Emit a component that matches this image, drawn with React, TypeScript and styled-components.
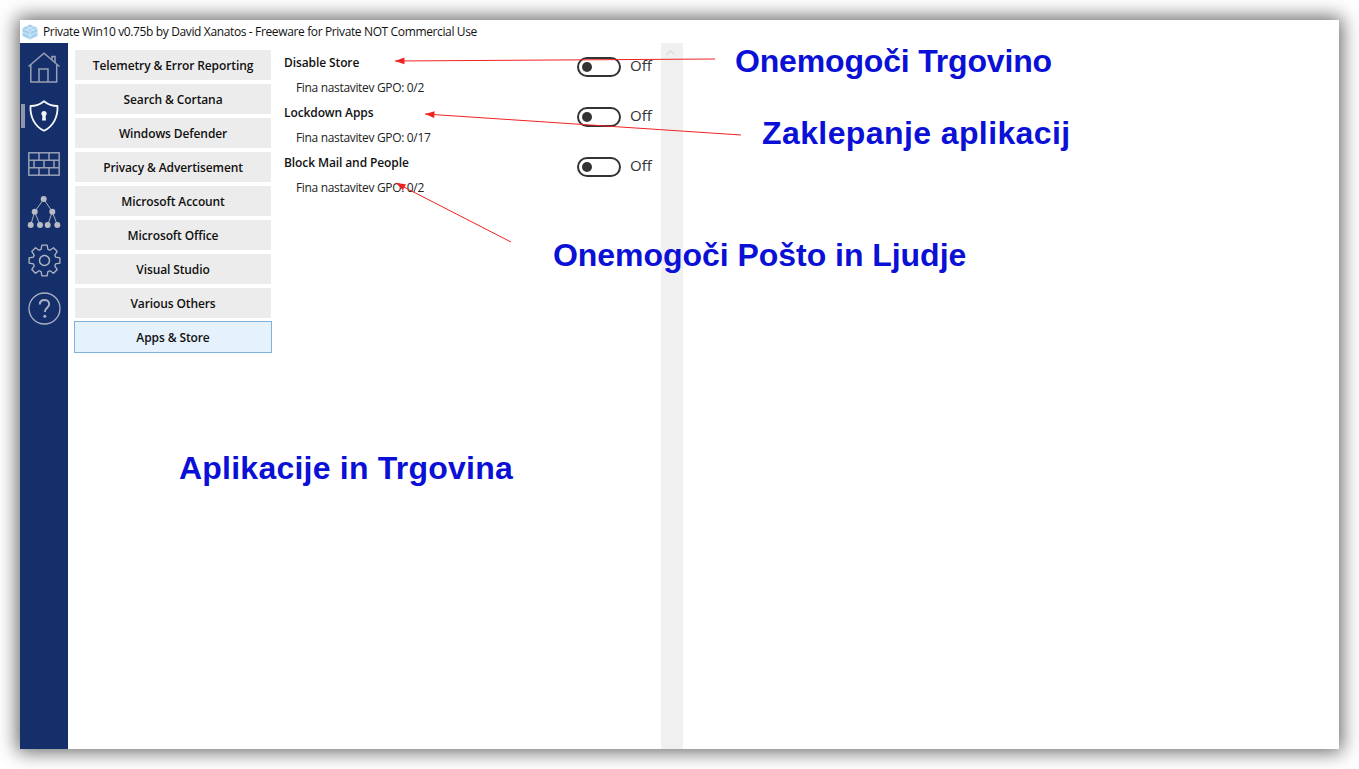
import React from "react";
import styled, { createGlobalStyle } from "styled-components";

const Global = createGlobalStyle`
  html, body { margin: 0; padding: 0; background: #fff; overflow: hidden; }
  body { font-family: "Open Sans", "Noto Sans", sans-serif; color: #1a1a1a; }
`;

const Stage = styled.div`
  position: relative;
  width: 1359px;
  height: 769px;
  padding: 20px;
  box-sizing: border-box;
`;

const Window = styled.div`
  width: 1319px;
  height: 729px;
  background: #fff;
  display: flex;
  flex-direction: column;
  box-shadow: 0 0 18px 3px rgba(0, 0, 0, 0.6);
`;

const TitleBar = styled.div`
  height: 23px;
  display: flex;
  align-items: center;
  gap: 5px;
  padding-left: 2px;
  font-size: 12px;
  letter-spacing: -0.365px;
  color: #111;
  white-space: nowrap;
`;

const Body = styled.div`
  flex: 1;
  display: flex;
  min-height: 0;
`;

const Rail = styled.nav`
  width: 48px;
  background: #152f6b;
  padding-top: 1px;
  display: flex;
  flex-direction: column;
`;

const RailItem = styled.div<{ $active?: boolean; $color: string }>`
  position: relative;
  height: 48px;
  display: flex;
  align-items: center;
  justify-content: center;
  color: ${(p) => p.$color};
  &::before {
    content: "";
    display: ${(p) => (p.$active ? "block" : "none")};
    position: absolute;
    left: 1px;
    top: 12px;
    width: 4px;
    height: 24px;
    background: #8e97ab;
  }
`;

const Menu = styled.div`
  width: 204px;
  box-sizing: border-box;
  padding: 7px 1px 0 7px;
  display: flex;
  flex-direction: column;
  gap: 4px;
`;

const MenuButton = styled.div<{ $active?: boolean }>`
  box-sizing: border-box;
  display: flex;
  align-items: center;
  justify-content: center;
  margin: ${(p) => (p.$active ? "-1px -1px 0" : "0")};
  height: ${(p) => (p.$active ? "32px" : "30px")};
  background: ${(p) => (p.$active ? "#e5f1fb" : "#ececec")};
  border: ${(p) => (p.$active ? "1px solid #7fb1da" : "0")};
  font-size: 12px;
  font-weight: 600;
  letter-spacing: -0.11px;
  color: #111;
`;

const Content = styled.div`
  width: 389px;
  padding: 0 0 0 12px;
  box-sizing: border-box;
`;

const Rows = styled.div`
  padding-top: 7px;
`;

const Row = styled.div`
  height: 50px;
  display: grid;
  grid-template-columns: 293px auto;
  grid-template-rows: 25px 25px;
  align-items: center;
`;

const RowTitle = styled.div`
  font-size: 12px;
  font-weight: 600;
  letter-spacing: -0.1px;
  color: #111;
  grid-column: 1;
  grid-row: 1;
`;

const RowSub = styled.div`
  font-size: 12px;
  letter-spacing: -0.33px;
  color: #222;
  padding-left: 12px;
  grid-column: 1;
  grid-row: 2;
`;

const ToggleWrap = styled.div`
  grid-column: 2;
  grid-row: 1 / 3;
  align-self: start;
  margin-top: 7px;
  display: flex;
  align-items: center;
  gap: 9px;
`;

const Toggle = styled.div`
  width: 44px;
  height: 20px;
  box-sizing: border-box;
  border: 2px solid #333;
  border-radius: 10px;
  display: flex;
  align-items: center;
  padding-left: 3px;
  &::before {
    content: "";
    width: 10px;
    height: 10px;
    border-radius: 50%;
    background: #333;
  }
`;

const ToggleLabel = styled.span`
  font-size: 15px;
  line-height: 20px;
  margin-top: -4px;
  color: #333;
`;

const ScrollTrack = styled.div`
  width: 22px;
  background: #f0f0f0;
  display: flex;
  justify-content: center;
  align-items: flex-start;
  padding: 7px 4px 0 0;
  box-sizing: border-box;
`;

const Note = styled.div<{ $x: number; $y: number; $spacing: number }>`
  position: absolute;
  left: ${(p) => p.$x}px;
  top: ${(p) => p.$y}px;
  font-family: "Liberation Sans", Arial, sans-serif;
  font-weight: 700;
  font-size: 32px;
  line-height: 37px;
  letter-spacing: ${(p) => p.$spacing}px;
  color: #0a10d6;
  white-space: nowrap;
`;

const ArrowLayer = styled.svg`
  position: absolute;
  left: 0;
  top: 0;
  pointer-events: none;
`;

const Home = () => (
  <svg width="34" height="32" viewBox="0 0 34 32" fill="none" stroke="currentColor" strokeWidth="1.5">
    <path d="M1.5 14.5 L17 1.2 L32.5 14.5" />
    <path d="M25 7.8 V4.5 H28 V10.4" />
    <path d="M3.8 12.5 V30 H29.7 V12.5" />
    <path d="M12 30 V17 H21 V30" />
  </svg>
);

const Shield = () => (
  <svg width="30" height="32" viewBox="0 0 30 32" fill="none">
    <path d="M15 1.2 C19 4.5 24 6 28.5 6 C29 16 25 26 15 30.8 C5 26 1 16 1.5 6 C6 6 11 4.5 15 1.2 Z" stroke="currentColor" strokeWidth="1.8" strokeLinejoin="round" />
    <circle cx="15" cy="13.5" r="2.6" fill="currentColor" />
    <path d="M13.6 14 H16.4 L17 20.5 H13 Z" fill="currentColor" />
  </svg>
);

const Wall = () => (
  <svg width="32" height="24" viewBox="0 0 32 24" fill="none" stroke="currentColor" strokeWidth="1.5">
    <rect x="0.8" y="0.8" width="30.4" height="22.4" />
    <path d="M0.8 8.2 H31.2 M0.8 15.8 H31.2" />
    <path d="M11 0.8 V8.2 M21 0.8 V8.2 M6 8.2 V15.8 M16 8.2 V15.8 M26 8.2 V15.8 M11 15.8 V23.2 M21 15.8 V23.2" />
  </svg>
);

const Tree = () => (
  <svg width="34" height="34" viewBox="0 0 34 34" fill="none" stroke="currentColor" strokeWidth="0.9">
    <path d="M16.7 4 L7.7 16.8 M16.7 4 L25.3 16.8 M7.7 16.8 L3.7 30 M7.7 16.8 L13 30 M25.3 16.8 L20.7 30 M25.3 16.8 L30.3 30" />
    <g fill="currentColor" stroke="none">
      <circle cx="16.7" cy="4" r="3" />
      <circle cx="7.7" cy="16.8" r="3" />
      <circle cx="25.3" cy="16.8" r="3" />
      <circle cx="3.7" cy="30" r="3" />
      <circle cx="13" cy="30" r="3" />
      <circle cx="20.7" cy="30" r="3" />
      <circle cx="30.3" cy="30" r="3" />
    </g>
  </svg>
);

function gearPath() {
  const c = 16.5;
  const pts: string[] = [];
  const teeth = 8;
  const pt = (r: number, a: number) => `${(c + r * Math.cos(a)).toFixed(2)} ${(c + r * Math.sin(a)).toFixed(2)}`;
  for (let i = 0; i < teeth; i++) {
    const a = (i * 2 * Math.PI) / teeth - Math.PI / 2;
    pts.push(pt(11.6, a - 0.3), pt(15.6, a - 0.17), pt(15.6, a + 0.17), pt(11.6, a + 0.3));
  }
  return `M${pts.join(" L")} Z`;
}

const Gear = () => (
  <svg width="33" height="33" viewBox="0 0 33 33" fill="none" stroke="currentColor" strokeWidth="1.3" strokeLinejoin="round">
    <path d={gearPath()} />
    <circle cx="16.5" cy="16.5" r="5" strokeWidth="1.5" />
  </svg>
);

const Help = () => (
  <svg width="33" height="33" viewBox="0 0 33 33" fill="none" stroke="currentColor">
    <circle cx="16.5" cy="16.5" r="15.5" strokeWidth="1.3" />
    <path d="M11.8 12.5 C11.8 9.5 14 8 16.5 8 C19 8 21.2 9.6 21.2 12.2 C21.2 15.6 16.8 15.8 16.8 20" strokeWidth="2" />
    <circle cx="16.8" cy="24.3" r="1.5" fill="currentColor" stroke="none" />
  </svg>
);

const AppIcon = () => (
  <svg width="16" height="16" viewBox="0 0 16 16">
    <path d="M8 0.5 L15.5 4 V12 L8 15.5 L0.5 12 V4 Z" fill="#a3d0ec" />
    <path d="M0.5 4 L8 7.5 L15.5 4 M8 7.5 V15.5 M0.5 8 L8 11.5 L15.5 8 M4 2.4 L11.5 6 M12 2.4 L4.5 6" fill="none" stroke="#dff0fa" strokeWidth="0.8" />
  </svg>
);

const Chevron = () => (
  <svg width="9" height="5" viewBox="0 0 9 5" fill="none" stroke="#d6d6d6" strokeWidth="1.2">
    <path d="M0.5 4.5 L4.5 0.8 L8.5 4.5" />
  </svg>
);

const menu = [
  "Telemetry & Error Reporting",
  "Search & Cortana",
  "Windows Defender",
  "Privacy & Advertisement",
  "Microsoft Account",
  "Microsoft Office",
  "Visual Studio",
  "Various Others",
  "Apps & Store",
];

const rows = [
  { title: "Disable Store", sub: "Fina nastavitev GPO: 0/2" },
  { title: "Lockdown Apps", sub: "Fina nastavitev GPO: 0/17" },
  { title: "Block Mail and People", sub: "Fina nastavitev GPO: 0/2" },
];

const arrows = [
  { x1: 715, y1: 59, x2: 395, y2: 61 },
  { x1: 741, y1: 135, x2: 425, y2: 114 },
  { x1: 511, y1: 242, x2: 396, y2: 183 },
];

function head(a: { x1: number; y1: number; x2: number; y2: number }) {
  const t = Math.atan2(a.y1 - a.y2, a.x1 - a.x2);
  const l = 10;
  const w = 0.34;
  const p = (d: number) => `${a.x2 + l * Math.cos(t + d)},${a.y2 + l * Math.sin(t + d)}`;
  return `${a.x2},${a.y2} ${p(w)} ${p(-w)}`;
}

export default function App() {
  return (
    <Stage>
      <Global />
      <Window>
        <TitleBar>
          <AppIcon />
          <span>Private Win10 v0.75b by David Xanatos - Freeware for Private NOT Commercial Use</span>
        </TitleBar>
        <Body>
          <Rail>
            <RailItem $color="#98a0b4"><Home /></RailItem>
            <RailItem $active $color="#f4f5f8"><Shield /></RailItem>
            <RailItem $color="#98a0b4"><Wall /></RailItem>
            <RailItem $color="#b9bcc6"><Tree /></RailItem>
            <RailItem $color="#b0b5c3"><Gear /></RailItem>
            <RailItem $color="#aab0c0"><Help /></RailItem>
          </Rail>
          <Menu>
            {menu.map((m) => (
              <MenuButton key={m} $active={m === "Apps & Store"}>{m}</MenuButton>
            ))}
          </Menu>
          <Content>
            <Rows>
              {rows.map((r) => (
                <Row key={r.title}>
                  <RowTitle>{r.title}</RowTitle>
                  <RowSub>{r.sub}</RowSub>
                  <ToggleWrap>
                    <Toggle />
                    <ToggleLabel>Off</ToggleLabel>
                  </ToggleWrap>
                </Row>
              ))}
            </Rows>
          </Content>
          <ScrollTrack><Chevron /></ScrollTrack>
        </Body>
      </Window>
      <ArrowLayer width="1359" height="769" viewBox="0 0 1359 769">
        {arrows.map((a) => (
          <g key={a.x1}>
            <line x1={a.x1} y1={a.y1} x2={a.x2} y2={a.y2} stroke="#f02222" strokeWidth="1" />
            <polygon points={head(a)} fill="#f02222" />
          </g>
        ))}
      </ArrowLayer>
      <Note $x={735} $y={43} $spacing={-0.17}>Onemogoči Trgovino</Note>
      <Note $x={762} $y={115} $spacing={0.4}>Zaklepanje aplikacij</Note>
      <Note $x={553} $y={237} $spacing={-0.04}>Onemogoči Pošto in Ljudje</Note>
      <Note $x={179} $y={450} $spacing={0.23}>Aplikacije in Trgovina</Note>
    </Stage>
  );
}
